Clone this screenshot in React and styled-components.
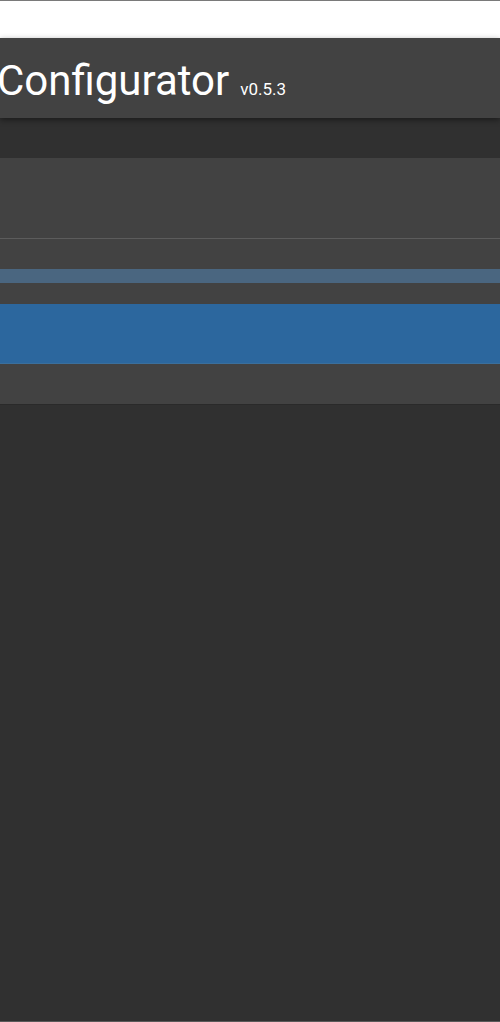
import styled, { createGlobalStyle } from "styled-components";

const panelColor = "#424242";
const pageColor = "#303030";
const blue = "#2c679e";

const GlobalStyle = createGlobalStyle`
  html, body {
    margin: 0;
    padding: 0;
    background: ${pageColor};
    font-family: Roboto, "Liberation Sans", sans-serif;
  }
  * { box-sizing: border-box; }
`;

const Page = styled.div`
  min-height: 100vh;
  display: flex;
  flex-direction: column;
  overflow: hidden;
  border-bottom: 1px solid #5a5a5a;
`;

const TopStrip = styled.div`
  height: 38px;
  background: #fff;
  border-top: 1px solid #7a7a7a;
`;

const Header = styled.header`
  height: 80px;
  background: ${panelColor};
  display: flex;
  align-items: center;
  box-shadow: 0 2px 6px rgba(0, 0, 0, 0.45);
  position: relative;
  z-index: 1;
`;

const Title = styled.h1`
  margin: 4px 0 0 -3px;
  color: #fff;
  font-size: 42px;
  font-weight: 400;
  white-space: nowrap;
`;

const Version = styled.small`
  font-size: 17px;
  margin-left: 11px;
`;

const Main = styled.main`
  padding-top: 40px;
`;

const Panel = styled.section`
  background: ${panelColor};
  border-bottom: 1px solid #2a2a2a;
`;

const PanelHead = styled.div`
  height: 81px;
  border-bottom: 1px solid #5c5c5c;
`;

const PanelBody = styled.div`
  padding: 30px 0 40px;
  display: flex;
  flex-direction: column;
`;

const Track = styled.div`
  height: 14px;
  background: #4a6680;
  margin-bottom: 21px;
`;

const Selected = styled.div`
  height: 60px;
  background: ${blue};
  border-bottom: 1px solid #3b6f9c;
`;

export default function App() {
  return (
    <Page>
      <GlobalStyle />
      <TopStrip />
      <Header>
        <Title>
          Configurator<Version>v0.5.3</Version>
        </Title>
      </Header>
      <Main>
        <Panel>
          <PanelHead />
          <PanelBody>
            <Track />
            <Selected />
          </PanelBody>
        </Panel>
      </Main>
    </Page>
  );
}
